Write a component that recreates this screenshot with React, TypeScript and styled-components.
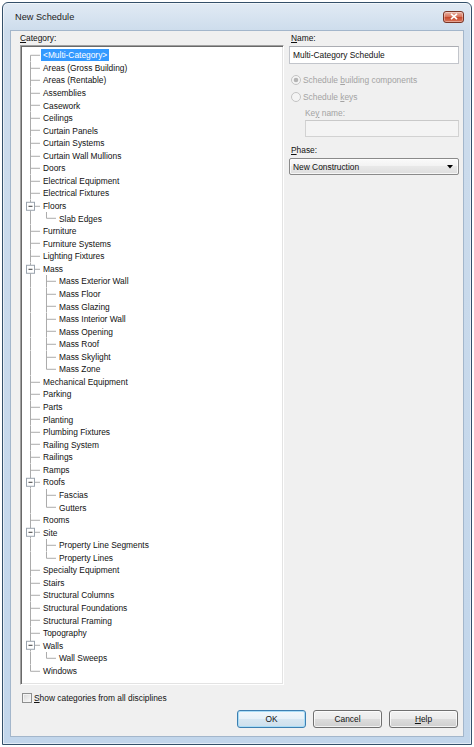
import React from 'react';
import styled, { createGlobalStyle } from 'styled-components';

// rows in the reference are ~12.57px apart (scaled-down screenshot)
const ROW_H = 616 / 49;
const LINE = '#ababab';

type Category = { label: string; children?: string[] };

const categories: Category[] = [
  { label: '<Multi-Category>' },
  { label: 'Areas (Gross Building)' },
  { label: 'Areas (Rentable)' },
  { label: 'Assemblies' },
  { label: 'Casework' },
  { label: 'Ceilings' },
  { label: 'Curtain Panels' },
  { label: 'Curtain Systems' },
  { label: 'Curtain Wall Mullions' },
  { label: 'Doors' },
  { label: 'Electrical Equipment' },
  { label: 'Electrical Fixtures' },
  { label: 'Floors', children: ['Slab Edges'] },
  { label: 'Furniture' },
  { label: 'Furniture Systems' },
  { label: 'Lighting Fixtures' },
  {
    label: 'Mass',
    children: [
      'Mass Exterior Wall',
      'Mass Floor',
      'Mass Glazing',
      'Mass Interior Wall',
      'Mass Opening',
      'Mass Roof',
      'Mass Skylight',
      'Mass Zone',
    ],
  },
  { label: 'Mechanical Equipment' },
  { label: 'Parking' },
  { label: 'Parts' },
  { label: 'Planting' },
  { label: 'Plumbing Fixtures' },
  { label: 'Railing System' },
  { label: 'Railings' },
  { label: 'Ramps' },
  { label: 'Roofs', children: ['Fascias', 'Gutters'] },
  { label: 'Rooms' },
  { label: 'Site', children: ['Property Line Segments', 'Property Lines'] },
  { label: 'Specialty Equipment' },
  { label: 'Stairs' },
  { label: 'Structural Columns' },
  { label: 'Structural Foundations' },
  { label: 'Structural Framing' },
  { label: 'Topography' },
  { label: 'Walls', children: ['Wall Sweeps'] },
  { label: 'Windows' },
];

type TreeRow = {
  label: string;
  depth: 0 | 1;
  first: boolean;
  last: boolean;
  expander: boolean;
};

const rows: TreeRow[] = [];
categories.forEach((c, i) => {
  rows.push({
    label: c.label,
    depth: 0,
    first: i === 0,
    last: i === categories.length - 1,
    expander: !!c.children,
  });
  c.children?.forEach((child, j) =>
    rows.push({
      label: child,
      depth: 1,
      first: false,
      last: j === c.children!.length - 1,
      expander: false,
    })
  );
});

const GlobalStyle = createGlobalStyle`
  html, body {
    margin: 0;
    padding: 0;
    background: #ffffff;
  }
  body {
    font-family: "Liberation Sans", Arial, sans-serif;
    font-size: 8.4px;
    color: #111;
  }
  #root {
    width: 474px;
    height: 747px;
  }
`;

const Window = styled.div`
  box-sizing: border-box;
  margin: 2px 0 0 2px;
  width: 470px;
  height: 743px;
  display: flex;
  flex-direction: column;
  border: 1px solid #34506a;
  border-radius: 6px 6px 0 0;
  background: linear-gradient(to bottom, #e1eaf4 0px, #cddcec 28px, #c2d6eb 100%);
  box-shadow: inset 0 0 0 1px rgba(255, 255, 255, 0.55);
`;

const TitleBar = styled.div`
  flex: none;
  height: 27px;
  display: flex;
  align-items: center;
  justify-content: space-between;
  padding: 0 7px 0 12px;
`;

const Title = styled.span`
  font-size: 9.2px;
  color: #1b1b1b;
`;

const CloseButton = styled.div`
  width: 21px;
  height: 12px;
  box-sizing: border-box;
  display: flex;
  align-items: center;
  justify-content: center;
  border: 1px solid #7a3526;
  border-radius: 3px;
  background: linear-gradient(to bottom, #eab3a4 0%, #d9775f 45%, #c74a2e 55%, #d9765b 100%);
  box-shadow: inset 0 0 0 1px rgba(255, 255, 255, 0.35);
`;

const Body = styled.div`
  flex: 1;
  margin: 0 7px 7px 7px;
  background: #f0f0f0;
  border: 1px solid #a3b6cb;
  display: flex;
  flex-direction: column;
`;

const Main = styled.div`
  display: flex;
  gap: 5px;
  padding: 1px 4px 0 9px;
`;

const LeftColumn = styled.div`
  width: 264px;
  display: flex;
  flex-direction: column;
`;

const RightColumn = styled.div`
  width: 170px;
  display: flex;
  flex-direction: column;
`;

const FieldLabel = styled.div<{ $indent?: number; $gap?: number; $disabled?: boolean }>`
  height: 12px;
  line-height: 12px;
  padding-left: ${p => p.$indent ?? 0}px;
  margin-top: ${p => p.$gap ?? 0}px;
  color: ${p => (p.$disabled ? '#a3a3a3' : '#111')};
`;

const Key = styled.span`
  text-decoration: underline;
`;

const TreeBox = styled.div`
  box-sizing: border-box;
  margin-top: 1px;
  height: 640px;
  padding: 3px 0 0 1px;
  background: #fff;
  border: 1px solid;
  border-color: #a0a0a0 #ffffff #ffffff #a0a0a0;
  box-shadow: inset 1px 1px 0 #696969, inset -1px -1px 0 #e3e3e3;
  overflow: hidden;
`;

const Row = styled.div`
  display: flex;
  align-items: center;
  height: ${ROW_H}px;
  white-space: nowrap;
`;

const ItemText = styled.span<{ $selected?: boolean }>`
  padding: 0 2px;
  line-height: 12px;
  background: ${p => (p.$selected ? '#3399ff' : 'transparent')};
  color: ${p => (p.$selected ? '#fff' : '#111')};
`;

const TextBox = styled.div<{ $disabled?: boolean; $gap?: number; $indent?: number; $h?: number }>`
  box-sizing: border-box;
  height: ${p => p.$h ?? 17}px;
  margin-top: ${p => p.$gap ?? 0}px;
  margin-left: ${p => p.$indent ?? 0}px;
  padding-left: 3px;
  display: flex;
  align-items: center;
  background: ${p => (p.$disabled ? '#f4f4f4' : '#fff')};
  border: 1px solid ${p => (p.$disabled ? '#d2d2d2' : '#c2c5cb')};
  border-top-color: ${p => (p.$disabled ? '#c9c9c9' : '#abadb3')};
`;

const RadioRow = styled.div<{ $gap: number }>`
  display: flex;
  align-items: center;
  gap: 2px;
  height: 12px;
  margin-top: ${p => p.$gap}px;
  padding-left: 2px;
  color: #a3a3a3;
`;

const Select = styled.div`
  box-sizing: border-box;
  height: 17px;
  margin-top: 2px;
  padding: 0 5px 0 3px;
  display: flex;
  align-items: center;
  justify-content: space-between;
  border: 1px solid #8a8a8a;
  border-radius: 2px;
  background: linear-gradient(to bottom, #fafafa 0%, #f2f2f2 50%, #e8e8e8 50%, #dedede 100%);
  box-shadow: inset 0 0 0 1px rgba(255, 255, 255, 0.7);
`;

const CheckRow = styled.div`
  display: flex;
  align-items: center;
  gap: 2px;
  height: 12px;
  margin-top: 7px;
  padding-left: 11px;
`;

const CheckBox = styled.div`
  box-sizing: border-box;
  width: 10px;
  height: 10px;
  border: 1px solid #8e8f8f;
  background: linear-gradient(135deg, #d6d6d6 0%, #f4f4f4 80%, #ffffff 100%);
  box-shadow: inset 0 0 0 1px #f3f3f3;
`;

const ButtonRow = styled.div`
  display: flex;
  justify-content: flex-end;
  gap: 7px;
  margin-top: 6px;
  padding-right: 5px;
`;

const Button = styled.button<{ $default?: boolean }>`
  box-sizing: border-box;
  width: 69px;
  height: 18px;
  padding: 0;
  font: inherit;
  color: #111;
  border: 1px solid ${p => (p.$default ? '#3c7fb1' : '#707070')};
  border-radius: 3px;
  background: ${p =>
    p.$default
      ? 'linear-gradient(to bottom, #f1f7fb 0%, #e6f1f8 50%, #d7e7f2 50%, #cddfec 100%)'
      : 'linear-gradient(to bottom, #f2f2f2 0%, #ebebeb 50%, #dddddd 50%, #cfcfcf 100%)'};
  box-shadow: inset 0 0 0 1px ${p => (p.$default ? '#a9dcf6' : 'rgba(255, 255, 255, 0.75)')};
`;

function Connector({ row }: { row: TreeRow }) {
  const mid = ROW_H / 2;
  const w = row.depth === 0 ? 19 : 35;
  const parts: React.ReactNode[] = [];

  if (row.depth === 0) {
    const top = row.first ? mid : 0;
    const bottom = row.last ? mid : ROW_H;
    if (row.expander) {
      parts.push(<line key="a" x1={8.5} y1={top} x2={8.5} y2={mid - 4} />);
      parts.push(<line key="b" x1={8.5} y1={mid + 4} x2={8.5} y2={bottom} />);
      parts.push(<line key="h" x1={12.5} y1={mid} x2={18} y2={mid} />);
      parts.push(
        <rect key="box" x={4.5} y={mid - 4} width={8} height={8} fill="#fff" stroke="#9aa3ad" />
      );
      parts.push(<line key="m" x1={6.5} y1={mid} x2={10.5} y2={mid} stroke="#3a3a3a" />);
    } else {
      parts.push(<line key="v" x1={8.5} y1={top} x2={8.5} y2={bottom} />);
      parts.push(<line key="h" x1={8.5} y1={mid} x2={18} y2={mid} />);
    }
  } else {
    parts.push(<line key="root" x1={8.5} y1={0} x2={8.5} y2={ROW_H} />);
    parts.push(<line key="v" x1={24.5} y1={0} x2={24.5} y2={row.last ? mid : ROW_H} />);
    parts.push(<line key="h" x1={24.5} y1={mid} x2={34} y2={mid} />);
  }

  return (
    <svg width={w} height={ROW_H} viewBox={`0 0 ${w} ${ROW_H}`} stroke={LINE} strokeWidth={1} style={{ flex: 'none' }}>
      {parts}
    </svg>
  );
}

function Radio({ checked }: { checked?: boolean }) {
  return (
    <svg width="10" height="10" viewBox="0 0 10 10">
      <circle cx="5" cy="5" r="4.5" fill="#f4f4f4" stroke="#c3c3c3" />
      {checked && <circle cx="5" cy="5" r="2.3" fill="#b4b4b4" />}
    </svg>
  );
}

export default function App() {
  return (
    <>
      <GlobalStyle />
      <Window>
        <TitleBar>
          <Title>New Schedule</Title>
          <CloseButton>
            <svg width="8" height="7" viewBox="0 0 8 7">
              <path d="M1 0.8 L7 6.2 M7 0.8 L1 6.2" stroke="#fff" strokeWidth="1.6" />
            </svg>
          </CloseButton>
        </TitleBar>
        <Body>
          <Main>
            <LeftColumn>
              <FieldLabel>
                <Key>C</Key>ategory:
              </FieldLabel>
              <TreeBox>
                {rows.map((row, i) => (
                  <Row key={i}>
                    <Connector row={row} />
                    <ItemText $selected={i === 0}>{row.label}</ItemText>
                  </Row>
                ))}
              </TreeBox>
            </LeftColumn>
            <RightColumn>
              <FieldLabel $indent={2}>
                <Key>N</Key>ame:
              </FieldLabel>
              <TextBox $gap={2} $h={18}>Multi-Category Schedule</TextBox>
              <RadioRow $gap={10}>
                <Radio checked />
                <span>
                  Schedule <Key>b</Key>uilding components
                </span>
              </RadioRow>
              <RadioRow $gap={5}>
                <Radio />
                <span>
                  Schedule <Key>k</Key>eys
                </span>
              </RadioRow>
              <FieldLabel $indent={16} $gap={4} $disabled>
                Ke<Key>y</Key> name:
              </FieldLabel>
              <TextBox $gap={1} $indent={16} $disabled />
              <FieldLabel $indent={2} $gap={7}>
                <Key>P</Key>hase:
              </FieldLabel>
              <Select>
                <span>New Construction</span>
                <svg width="6" height="4" viewBox="0 0 6 4">
                  <path d="M0 0 H6 L3 3.5 Z" fill="#000" />
                </svg>
              </Select>
            </RightColumn>
          </Main>
          <CheckRow>
            <CheckBox />
            <span>
              <Key>S</Key>how categories from all disciplines
            </span>
          </CheckRow>
          <ButtonRow>
            <Button $default>OK</Button>
            <Button>Cancel</Button>
            <Button>
              <Key>H</Key>elp
            </Button>
          </ButtonRow>
        </Body>
      </Window>
    </>
  );
}
